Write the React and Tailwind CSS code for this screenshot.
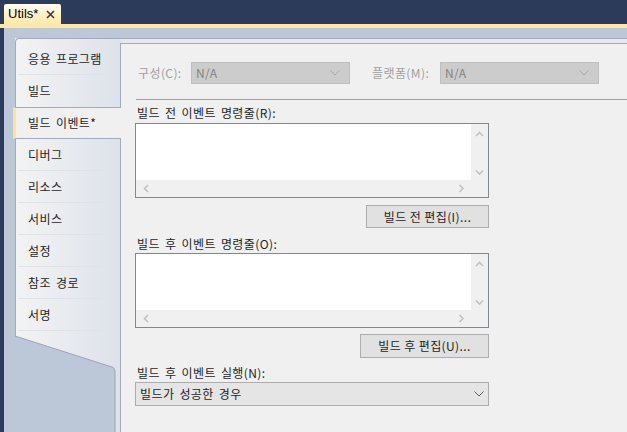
import React from "react";

const tabs = [
  { label: "응용 프로그램" },
  { label: "빌드", noLine: true },
  { label: "빌드 이벤트*", active: true },
  { label: "디버그" },
  { label: "리소스" },
  { label: "서비스" },
  { label: "설정" },
  { label: "참조 경로" },
  { label: "서명" },
];

function Chevron({ dir, color = "#c2c2c2" }) {
  const pts = {
    up: "1,5 4.5,1.5 8,5",
    down: "1,1.5 4.5,5 8,1.5",
    left: "5,1 1.5,4.5 5,8",
    right: "1.5,1 5,4.5 1.5,8",
  }[dir];
  const vertical = dir === "up" || dir === "down";
  return (
    <svg width={vertical ? 9 : 7} height={vertical ? 7 : 9} viewBox={vertical ? "0 0 9 7" : "0 0 7 9"}>
      <polyline points={pts} fill="none" stroke={color} strokeWidth="1.6" />
    </svg>
  );
}

function DropArrow({ color }) {
  return (
    <svg width="10" height="6" viewBox="0 0 10 6">
      <polyline points="0.5,0.5 5,5 9.5,0.5" fill="none" stroke={color} strokeWidth="1" />
    </svg>
  );
}

function TextArea() {
  return (
    <div className="grid grid-cols-[1fr_17px] grid-rows-[1fr_17px] h-[75px] w-[354px] border border-[#828790] bg-[#f0f0f0]">
      <div className="bg-white" />
      <div className="flex flex-col items-center justify-between pt-[7px] pb-[4px]">
        <Chevron dir="up" />
        <Chevron dir="down" />
      </div>
      <div className="flex items-center justify-between pl-[7px] pr-[6px]">
        <Chevron dir="left" />
        <Chevron dir="right" />
      </div>
      <div />
    </div>
  );
}

function DisabledCombo() {
  return (
    <div className="flex items-center justify-between w-[159px] h-[22px] bg-[#cccccc] border border-[#bfbfbf] pl-[4px] pr-[9px] text-[#838383]">
      <span>N/A</span>
      <DropArrow color="#a6a6a6" />
    </div>
  );
}

export default function App() {
  return (
    <div className="w-[627px] h-[432px] overflow-hidden flex flex-col bg-[#2b3b58] font-['Noto_Sans_CJK_KR','Noto_Sans',sans-serif] text-[12px] leading-[16px] tracking-[0.4px] [word-spacing:2px] text-[#1e1e1e]">
      {/* document tab strip */}
      <div className="h-[24px] flex items-end pl-[4px]">
        <div className="h-[20px] w-[57px] flex items-center justify-between pl-[4px] pr-[6px] rounded-t-[2px] bg-gradient-to-b from-[#fffcf2] to-[#ffe8a6] text-[13px] tracking-normal text-black">
          <span className="font-['Liberation_Sans',sans-serif]">Utils*</span>
          <svg width="9" height="9" viewBox="0 0 9 9">
            <path d="M1 1 L8 8 M8 1 L1 8" stroke="#3a3a3a" strokeWidth="1.6" />
          </svg>
        </div>
      </div>
      <div className="h-[4px] bg-[#ffe8a6]" />

      {/* property pages */}
      <div className="flex-1 flex ml-[4px] bg-[#bcc7d8] pt-[10px] pl-[11px]">
        {/* page list */}
        <div className="w-[106px] flex flex-col bg-gradient-to-r from-[#f3f3f3] to-[#dde2ea]">
          <div className="h-[5px] border-t border-l border-[#a3abbb] rounded-tl-[4px]" />
          {tabs.map((t) =>
            t.active ? (
              <div
                key={t.label}
                className="relative z-10 -ml-[2px] w-[108px] h-[32px] flex items-center pl-[12px] bg-[#f0f0f0] border-t border-b border-[#a3abbb] border-l-[3px] border-l-[#ffe39a]"
              >
                {t.label}
              </div>
            ) : (
              <div key={t.label} className="h-[32px] flex flex-col border-l border-r border-[#a3abbb]">
                <div className="flex-1 flex items-center pl-[12px]">{t.label}</div>
                <div className={`h-[1px] mx-[3px] w-[88px] ${t.noLine ? "" : "bg-[#dfe2e7]"}`} />
              </div>
            )
          )}
          <div className="flex-1 border-l border-r border-[#a3abbb]">
            <svg width="101" height="101" viewBox="0 0 101 101" className="-ml-[1px] block">
              <path d="M0 5 L97 36 Q100 37 100 40 L100 101 L0 101 Z" fill="#bcc7d8" />
              <path d="M0 5 L97 36 Q100 37 100 40 L100 101" fill="none" stroke="#9aa5b8" strokeWidth="1" />
            </svg>
          </div>
        </div>

        {/* page content */}
        <div className="flex-1 flex flex-col">
          <div className="h-[5px] border-t border-[#a3abbb] bg-[#e8e9ee]" />
          <div className="flex-1 border-t border-[#a3abbb] bg-[#f0f0f0]">
            <div className="flex items-center mt-[18px] pl-[17px]">
              <span className="w-[53px] text-[#a0a0a0]">구성(C):</span>
              <DisabledCombo />
              <span className="ml-[22px] w-[68px] text-[#a0a0a0]">플랫폼(M):</span>
              <DisabledCombo />
            </div>
            <div className="mt-[15px] ml-[15px] h-[1px] bg-[#a0a0a0]" />

            <div className="pl-[14px] w-[368px] flex flex-col">
              <div className="mt-[5px] pl-[2px]">빌드 전 이벤트 명령줄(R):</div>
              <div className="mt-[2px]">
                <TextArea />
              </div>
              <div className="mt-[7px] flex justify-end">
                <button className="w-[123px] h-[23px] bg-[#e1e1e1] border border-[#adadad] text-[#1e1e1e]">
                  빌드 전 편집(I)...
                </button>
              </div>
              <div className="mt-[8px] pl-[2px]">빌드 후 이벤트 명령줄(O):</div>
              <div className="mt-[1px]">
                <TextArea />
              </div>
              <div className="mt-[6px] flex justify-end">
                <button className="w-[129px] h-[24px] bg-[#e1e1e1] border border-[#adadad] text-[#1e1e1e]">
                  빌드 후 편집(U)...
                </button>
              </div>
              <div className="mt-[7px] pl-[2px]">빌드 후 이벤트 실행(N):</div>
              <div className="mt-[1px] w-[354px] h-[24px] flex items-center justify-between pl-[4px] pr-[4px] bg-[#e5e5e5] border border-[#acacac]">
                <span>빌드가 성공한 경우</span>
                <DropArrow color="#606060" />
              </div>
            </div>
          </div>
        </div>
      </div>
    </div>
  );
}
